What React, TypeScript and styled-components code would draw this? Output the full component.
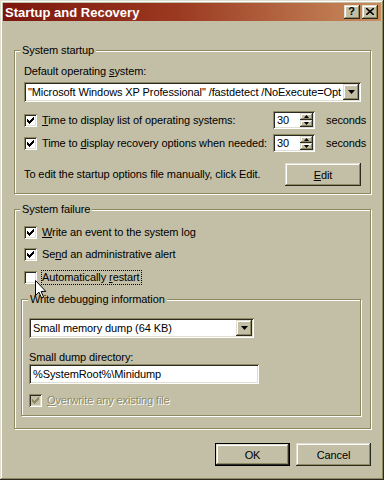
import styled, { createGlobalStyle } from "styled-components";

const face = "#c3bfa6";
const light = "#e0ded0";
const hilite = "#ffffff";
const shadow = "#8d8961";
const dark = "#2a2a20";

const GlobalStyle = createGlobalStyle`
  html, body { margin: 0; padding: 0; background: ${face}; }
  body {
    font-family: "Liberation Sans", Arial, sans-serif;
    font-size: 11px;
    letter-spacing: -0.1px;
    color: #000;
  }
`;

const raised = `
  box-shadow: inset -1px -1px ${dark}, inset 1px 1px ${light},
    inset -2px -2px ${shadow}, inset 2px 2px ${hilite};
`;

const sunken = `
  box-shadow: inset 1px 1px ${shadow}, inset -1px -1px ${hilite},
    inset 2px 2px ${dark}, inset -2px -2px ${light};
`;

const Window = styled.div`
  position: relative;
  width: 384px;
  height: 480px;
  box-sizing: border-box;
  padding: 3px;
  background: ${face};
  box-shadow: inset -1px -1px ${dark}, inset 1px 1px ${light},
    inset -2px -2px ${shadow}, inset 2px 2px ${hilite};
  display: flex;
  flex-direction: column;
`;

const TitleBar = styled.div`
  height: 18px;
  display: flex;
  align-items: center;
  justify-content: space-between;
  padding: 0 3px 0 2px;
  background: linear-gradient(90deg, #7c160e 0%, #9a3820 45%, #c98d5e 100%);
`;

const Title = styled.span`
  color: #fff;
  font-weight: bold;
  font-size: 13px;
  letter-spacing: 0;
`;

const CaptionButtons = styled.div`
  display: flex;
  gap: 2px;
`;

const CaptionButton = styled.div`
  width: 16px;
  height: 14px;
  box-sizing: border-box;
  background: ${face};
  ${raised}
  display: flex;
  align-items: center;
  justify-content: center;
  font-weight: bold;
  font-size: 11px;
  line-height: 11px;
  padding: 0 1px 1px 0;
`;

const Body = styled.div`
  flex: 1;
  padding: 29px 10px 0 11px;
  display: flex;
  flex-direction: column;
`;

const Group = styled.div<{ $pad: string; $mt?: number }>`
  position: relative;
  border: 1px solid ${shadow};
  box-shadow: inset 1px 1px ${hilite}, 1px 1px ${hilite};
  padding: ${(p) => p.$pad};
  margin-top: ${(p) => p.$mt ?? 0}px;
  display: flex;
  flex-direction: column;
`;

const GroupCaption = styled.span<{ $left: number }>`
  position: absolute;
  top: -7px;
  left: ${(p) => p.$left}px;
  padding: 0 2px;
  line-height: 13px;
  background: ${face};
  white-space: nowrap;
`;

const Text = styled.div<{ $mt?: number }>`
  line-height: 13px;
  height: 13px;
  margin-top: ${(p) => p.$mt ?? 0}px;
  white-space: nowrap;
`;

const Combo = styled.div<{ $w?: number; $mt?: number }>`
  width: ${(p) => (p.$w ? `${p.$w}px` : "auto")};
  height: 20px;
  margin-top: ${(p) => p.$mt ?? 0}px;
  box-sizing: border-box;
  padding: 2px;
  background: #fff;
  ${sunken}
  display: flex;
  align-items: center;
`;

const ComboText = styled.span`
  flex: 1;
  padding-left: 2px;
  white-space: nowrap;
  overflow: hidden;
`;

const DropButton = styled.div`
  width: 16px;
  height: 16px;
  flex: none;
  box-sizing: border-box;
  background: ${face};
  ${raised}
  display: flex;
  align-items: center;
  justify-content: center;
`;

const TextBox = styled.div<{ $w: number }>`
  width: ${(p) => p.$w}px;
  height: 20px;
  box-sizing: border-box;
  padding: 0 4px;
  background: #fff;
  ${sunken}
  display: flex;
  align-items: center;
`;

const CheckRow = styled.div<{ $mt?: number }>`
  display: flex;
  align-items: center;
  gap: 4px;
  height: 13px;
  margin-top: ${(p) => p.$mt ?? 0}px;
  white-space: nowrap;
`;

const Box = styled.div<{ $disabled?: boolean }>`
  width: 13px;
  height: 13px;
  flex: none;
  box-sizing: border-box;
  background: ${(p) => (p.$disabled ? face : "#fff")};
  ${sunken}
  display: flex;
  align-items: center;
  justify-content: center;
`;

const Label = styled.span<{ $focus?: boolean; $disabled?: boolean }>`
  border: 1px dotted ${(p) => (p.$focus ? "#000" : "transparent")};
  padding: 0 1px 0 0;
  margin: -1px 0;
  line-height: 13px;
  color: ${(p) => (p.$disabled ? shadow : "#000")};
  text-shadow: ${(p) => (p.$disabled ? `1px 1px ${hilite}` : "none")};
`;

const SpinRow = styled.div<{ $mt: number }>`
  display: grid;
  grid-template-columns: 249px 42px auto;
  align-items: center;
  height: 18px;
  margin-top: ${(p) => p.$mt}px;
`;

const Spin = styled.div`
  width: 42px;
  height: 18px;
  box-sizing: border-box;
  padding: 2px;
  background: #fff;
  ${sunken}
  display: flex;
`;

const SpinValue = styled.span`
  flex: 1;
  padding-left: 2px;
  line-height: 14px;
`;

const SpinButtons = styled.div`
  width: 13px;
  display: flex;
  flex-direction: column;
`;

const SpinButton = styled.div`
  flex: 1;
  background: ${face};
  ${raised}
  display: flex;
  align-items: center;
  justify-content: center;
`;

const Seconds = styled.span`
  padding-left: 11px;
  white-space: nowrap;
`;

const EditRow = styled.div`
  display: flex;
  align-items: center;
  justify-content: space-between;
  margin-top: 11px;
`;

const Button = styled.div<{ $default?: boolean; $w?: number }>`
  width: ${(p) => p.$w ?? 75}px;
  height: 23px;
  box-sizing: border-box;
  background: ${face};
  border: ${(p) => (p.$default ? "1px solid #000" : "none")};
  ${raised}
  display: flex;
  align-items: center;
  justify-content: center;
`;

const Indent = styled.div`
  padding-left: 3px;
  display: flex;
  flex-direction: column;
`;

const Footer = styled.div`
  display: flex;
  justify-content: flex-end;
  gap: 6px;
  margin-top: 14px;
`;

const Cursor = styled.svg`
  position: absolute;
  left: 35px;
  top: 280px;
`;

const Arrow = ({ up }: { up?: boolean }) => (
  <svg width="7" height="4" viewBox="0 0 7 4">
    <path d={up ? "M3.5 0 L7 4 L0 4 Z" : "M0 0 L7 0 L3.5 4 Z"} fill="#000" />
  </svg>
);

const SmallArrow = ({ up }: { up?: boolean }) => (
  <svg width="5" height="3" viewBox="0 0 5 3">
    <path d={up ? "M2.5 0 L5 3 L0 3 Z" : "M0 0 L5 0 L2.5 3 Z"} fill="#000" />
  </svg>
);

const Check = ({ color = "#000" }: { color?: string }) => (
  <svg width="7" height="7" viewBox="0 0 7 7">
    <path
      d="M0 2h1v1h1v1h1v-1h1v-1h1v-1h1v-1h1v3h-1v1h-1v1h-1v1h-1v1h-1v-1h-1v-1h-1z"
      fill={color}
    />
  </svg>
);

const SpinControl = ({ value }: { value: string }) => (
  <Spin>
    <SpinValue>{value}</SpinValue>
    <SpinButtons>
      <SpinButton>
        <SmallArrow up />
      </SpinButton>
      <SpinButton>
        <SmallArrow />
      </SpinButton>
    </SpinButtons>
  </Spin>
);

export default function App() {
  return (
    <>
      <GlobalStyle />
      <Window>
        <TitleBar>
          <Title>Startup and Recovery</Title>
          <CaptionButtons>
            <CaptionButton>?</CaptionButton>
            <CaptionButton>
              <svg width="8" height="7" viewBox="0 0 8 7">
                <path d="M0 0 L8 7 M8 0 L0 7" stroke="#000" strokeWidth="1.6" />
              </svg>
            </CaptionButton>
          </CaptionButtons>
        </TitleBar>

        <Body>
          <Group $pad="14px 9px 7px 9px">
            <GroupCaption $left={5}>System startup</GroupCaption>
            <Text>
              Default operating <u>s</u>ystem:
            </Text>
            <Combo $mt={4}>
              <ComboText>
                "Microsoft Windows XP Professional" /fastdetect /NoExecute=Opt
              </ComboText>
              <DropButton>
                <Arrow />
              </DropButton>
            </Combo>
            <SpinRow $mt={9}>
              <CheckRow>
                <Box>
                  <Check />
                </Box>
                <Label>
                  <u>T</u>ime to display list of operating systems:
                </Label>
              </CheckRow>
              <SpinControl value="30" />
              <Seconds>seconds</Seconds>
            </SpinRow>
            <SpinRow $mt={5}>
              <CheckRow>
                <Box>
                  <Check />
                </Box>
                <Label>
                  Time to <u>d</u>isplay recovery options when needed:
                </Label>
              </CheckRow>
              <SpinControl value="30" />
              <Seconds>seconds</Seconds>
            </SpinRow>
            <EditRow>
              <Text>To edit the startup options file manually, click Edit.</Text>
              <Button $w={76}>
                <span>
                  <u>E</u>dit
                </span>
              </Button>
            </EditRow>
          </Group>

          <Group $pad="16px 9px 12px 6px" $mt={15}>
            <GroupCaption $left={5}>System failure</GroupCaption>
            <Indent>
              <CheckRow>
                <Box>
                  <Check />
                </Box>
                <Label>
                  <u>W</u>rite an event to the system log
                </Label>
              </CheckRow>
              <CheckRow $mt={9}>
                <Box>
                  <Check />
                </Box>
                <Label>
                  Se<u>n</u>d an administrative alert
                </Label>
              </CheckRow>
              <CheckRow $mt={10}>
                <Box />
                <Label $focus>
                  Automatically <u>r</u>estart
                </Label>
              </CheckRow>
            </Indent>

            <Group $pad="18px 9px 8px 7px" $mt={15}>
              <GroupCaption $left={6}>Write debugging information</GroupCaption>
              <Combo $w={225}>
                <ComboText>Small memory dump (64 KB)</ComboText>
                <DropButton>
                  <Arrow />
                </DropButton>
              </Combo>
              <Text $mt={13}>Small dump directory:</Text>
              <TextBox $w={230}>%SystemRoot%\Minidump</TextBox>
              <CheckRow $mt={10}>
                <Box $disabled>
                  <Check color={shadow} />
                </Box>
                <Label $disabled>
                  <u>O</u>verwrite any existing file
                </Label>
              </CheckRow>
            </Group>
          </Group>

          <Footer>
            <Button $default>OK</Button>
            <Button>Cancel</Button>
          </Footer>
        </Body>

        <Cursor width="12" height="19" viewBox="0 0 12 19">
          <path
            d="M0.5 0.5 L0.5 15.5 L4 12.2 L6.6 18 L8.6 17.1 L6.1 11.4 L10.8 11.4 Z"
            fill="#fff"
            stroke="#000"
            strokeWidth="1"
          />
        </Cursor>
      </Window>
    </>
  );
}
